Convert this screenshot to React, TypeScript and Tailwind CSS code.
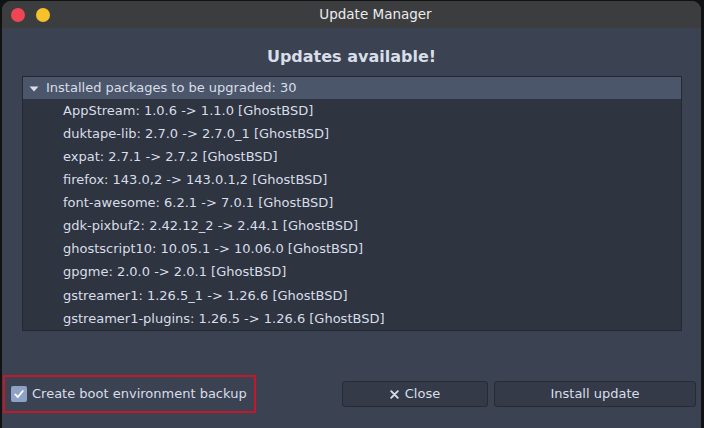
const packages = [
  "AppStream: 1.0.6 -> 1.1.0 [GhostBSD]",
  "duktape-lib: 2.7.0 -> 2.7.0_1 [GhostBSD]",
  "expat: 2.7.1 -> 2.7.2 [GhostBSD]",
  "firefox: 143.0,2 -> 143.0.1,2 [GhostBSD]",
  "font-awesome: 6.2.1 -> 7.0.1 [GhostBSD]",
  "gdk-pixbuf2: 2.42.12_2 -> 2.44.1 [GhostBSD]",
  "ghostscript10: 10.05.1 -> 10.06.0 [GhostBSD]",
  "gpgme: 2.0.0 -> 2.0.1 [GhostBSD]",
  "gstreamer1: 1.26.5_1 -> 1.26.6 [GhostBSD]",
  "gstreamer1-plugins: 1.26.5 -> 1.26.6 [GhostBSD]",
];

export default function App() {
  return (
    <div
      className="w-[704px] h-[428px] overflow-hidden bg-[#111214] pl-[2px] pr-[3px] pt-[1px] text-[13px] text-[#d8dee9]"
      style={{ fontFamily: '"DejaVu Sans", Verdana, sans-serif' }}
    >
      <div className="flex h-full flex-col overflow-hidden rounded-t-[9px] bg-[#3b4252]">
        {/* title bar */}
        <div className="relative flex h-[27px] shrink-0 items-center bg-[#3c3d3f] px-[9px]">
          <div className="flex gap-[11px]">
            <span className="h-[14px] w-[14px] rounded-full bg-[#ef4655]" />
            <span className="h-[14px] w-[14px] rounded-full bg-[#f7c12c]" />
          </div>
          <div className="absolute inset-0 flex items-center justify-center pl-[48px] text-[13.5px] text-[#ececec]">
            Update Manager
          </div>
        </div>

        {/* body */}
        <div className="flex flex-1 flex-col">
          <div className="mt-[19px] text-center text-[16px] font-bold leading-[20px] text-[#d8dee9]">
            Updates available!
          </div>

          <div className="ml-[20px] mr-[19px] mt-[9px] h-[255px] border border-[#232833] bg-[#2e3440]">
            <div className="flex h-[22px] items-center bg-[#4c566a] pl-[6px]">
              <svg width="10" height="6" viewBox="0 0 10 6" className="mr-[7px] mt-[1px]">
                <path d="M0.5 0.5 L9.5 0.5 L5 5.5 Z" fill="#d8dee9" />
              </svg>
              <span>Installed packages to be upgraded: 30</span>
            </div>
            {packages.map((p) => (
              <div key={p} className="flex h-[23.1px] items-center pl-[40px]">
                {p}
              </div>
            ))}
          </div>

          <div className="mt-[44px] flex items-center">
            <label className="ml-[1px] flex h-[38px] w-[253px] items-center border-2 border-[#c4172b] pl-[6px]">
              <span className="flex h-[16px] w-[16px] items-center justify-center rounded-[2px] bg-[#8da2c6]">
                <svg width="12" height="12" viewBox="0 0 12 12">
                  <path d="M2.2 6.4 L4.8 9 L9.8 3" fill="none" stroke="#ffffff" strokeWidth="1.8" strokeLinecap="round" strokeLinejoin="round" />
                </svg>
              </span>
              <span className="ml-[5px]">Create boot environment backup</span>
            </label>
            <div className="ml-auto mr-[5px] flex gap-[6px]">
              <button className="flex h-[26px] w-[146px] items-center justify-center rounded-[3px] border border-[#262b35] bg-[#343a48] text-[#d8dee9]">
                <svg width="9" height="9" viewBox="0 0 9 9" className="mr-[6px]">
                  <path d="M1.2 1.2 L7.8 7.8 M7.8 1.2 L1.2 7.8" stroke="#d8dee9" strokeWidth="1.9" strokeLinecap="round" />
                </svg>
                Close
              </button>
              <button className="flex h-[26px] w-[202px] items-center justify-center rounded-[3px] border border-[#262b35] bg-[#343a48] text-[#d8dee9]">
                Install update
              </button>
            </div>
          </div>
        </div>
      </div>
    </div>
  );
}
